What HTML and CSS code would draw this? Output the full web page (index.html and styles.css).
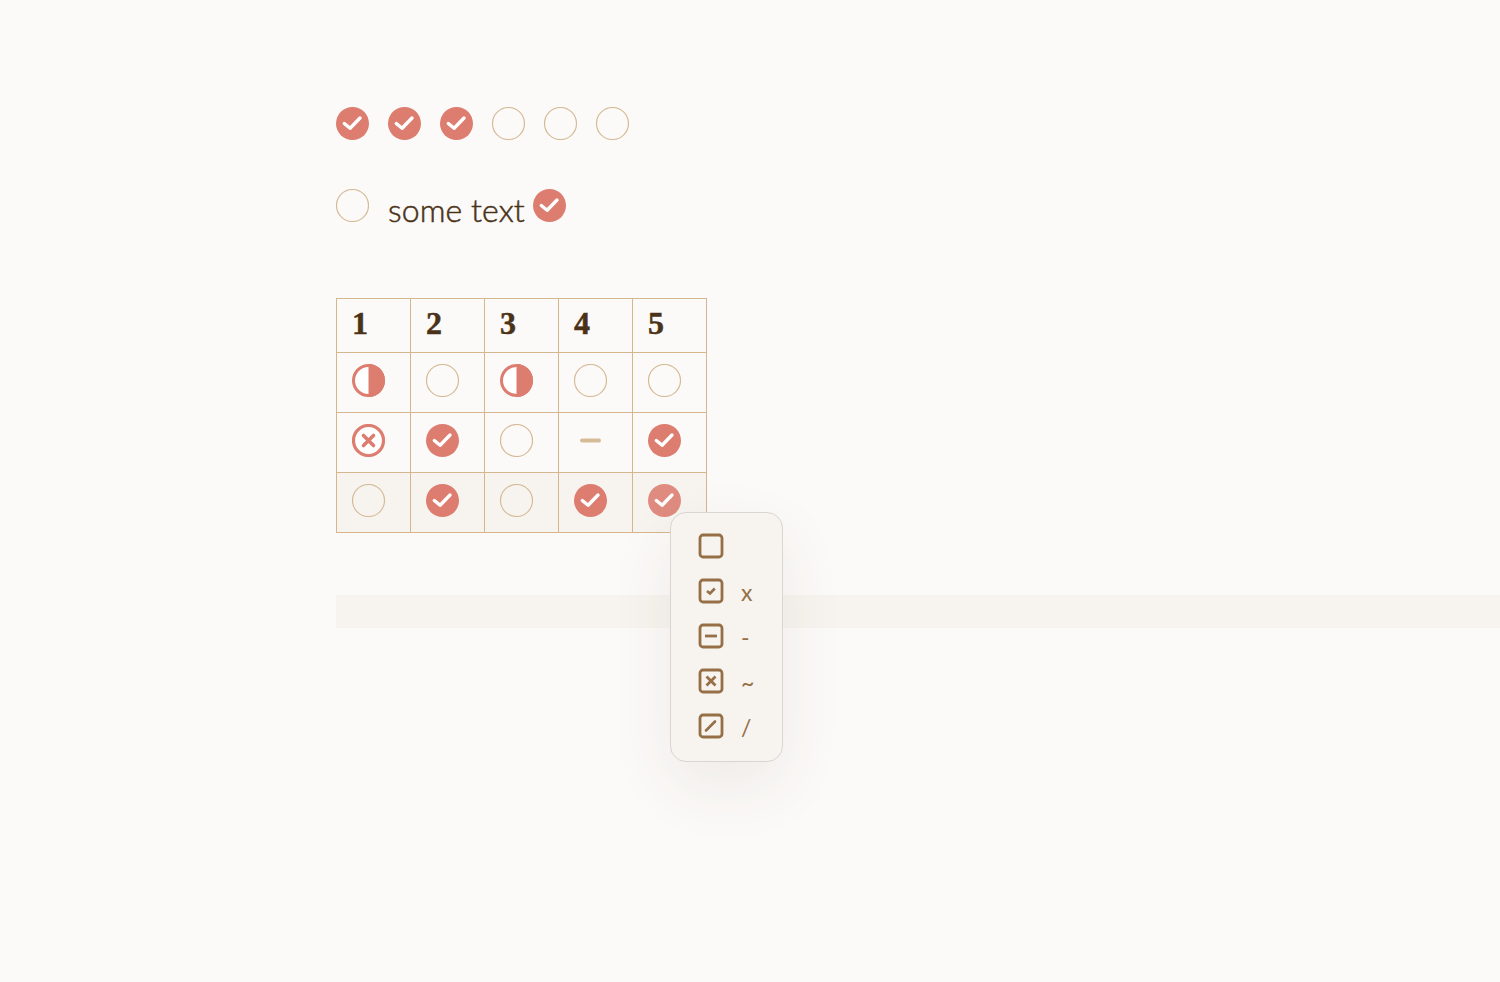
FILE: index.html
```html
<!DOCTYPE html>
<html lang="en">

<head>
  <meta charset="UTF-8">
  <meta name="viewport" content="width=device-width, initial-scale=1.0">
  <title>Task markers</title>
  <link rel="stylesheet" href="styles.css">
</head>

<body>
  <svg class="defs" width="0" height="0" aria-hidden="true">
    <symbol id="todo" viewBox="0 0 33 33">
      <circle cx="16.5" cy="16.5" r="16" fill="none" stroke="#d6bb98" stroke-width="1.2"></circle>
    </symbol>
    <symbol id="done" viewBox="0 0 33 33">
      <circle cx="16.5" cy="16.5" r="16.5" fill="#dd7d70"></circle>
      <path d="M8.300 16.500l5.800 4.800L24 11" fill="none" stroke="#fff" stroke-width="3.400" stroke-linecap="round" stroke-linejoin="round"></path>
    </symbol>
    <symbol id="half" viewBox="0 0 33 33">
      <circle cx="16.5" cy="16.5" r="15" fill="#fff" stroke="#dd7d70" stroke-width="3"></circle>
      <path d="M16.5 0a16.5 16.5 0 0 1 0 33z" fill="#dd7d70"></path>
    </symbol>
    <symbol id="cancel" viewBox="0 0 33 33">
      <circle cx="16.5" cy="16.5" r="15" fill="#fff" stroke="#dd7d70" stroke-width="3.200"></circle>
      <path d="M11.500 11.500l10 10M21.500 11.500l-10 10" fill="none" stroke="#dd7d70" stroke-width="3.600" stroke-linecap="round"></path>
    </symbol>
    <symbol id="dash" viewBox="0 0 33 33">
      <path d="M8 16.500h17" fill="none" stroke="#d6bb98" stroke-width="4" stroke-linecap="round"></path>
    </symbol>
    <symbol id="box" viewBox="0 0 26 26">
      <rect x="2" y="2" width="22" height="22" rx="3" fill="none" stroke="#966f47" stroke-width="2.800"></rect>
    </symbol>
  </svg>

  <main class="page">
    <div class="row">
      <svg class="mark"><use href="#done"></use></svg>
      <svg class="mark"><use href="#done"></use></svg>
      <svg class="mark"><use href="#done"></use></svg>
      <svg class="mark"><use href="#todo"></use></svg>
      <svg class="mark"><use href="#todo"></use></svg>
      <svg class="mark"><use href="#todo"></use></svg>
    </div>

    <div class="row row-text">
      <svg class="mark"><use href="#todo"></use></svg>
      <span class="label">some text</span>
      <svg class="mark"><use href="#done"></use></svg>
    </div>

    <table class="grid">
      <thead>
        <tr>
          <th>1</th>
          <th>2</th>
          <th>3</th>
          <th>4</th>
          <th>5</th>
        </tr>
      </thead>
      <tbody>
        <tr>
          <td><svg class="mark"><use href="#half"></use></svg></td>
          <td><svg class="mark"><use href="#todo"></use></svg></td>
          <td><svg class="mark"><use href="#half"></use></svg></td>
          <td><svg class="mark"><use href="#todo"></use></svg></td>
          <td><svg class="mark"><use href="#todo"></use></svg></td>
        </tr>
        <tr>
          <td><svg class="mark"><use href="#cancel"></use></svg></td>
          <td><svg class="mark"><use href="#done"></use></svg></td>
          <td><svg class="mark"><use href="#todo"></use></svg></td>
          <td><svg class="mark"><use href="#dash"></use></svg></td>
          <td><svg class="mark"><use href="#done"></use></svg></td>
        </tr>
        <tr class="active">
          <td><svg class="mark"><use href="#todo"></use></svg></td>
          <td><svg class="mark"><use href="#done"></use></svg></td>
          <td><svg class="mark"><use href="#todo"></use></svg></td>
          <td><svg class="mark"><use href="#done"></use></svg></td>
          <td><svg class="mark hovered"><use href="#done"></use></svg></td>
        </tr>
      </tbody>
    </table>

    <div class="bar"></div>
  </main>

  <!-- status menu -->
  <div class="menu">
    <div class="menu-item">
      <svg class="box"><use href="#box"></use></svg>
    </div>
    <div class="menu-item">
      <svg class="box" viewBox="0 0 26 26">
        <use href="#box"></use>
        <path d="M9 13l3 2.500 4.800-5" fill="none" stroke="#966f47" stroke-width="2.600"></path>
      </svg>
      <span>x</span>
    </div>
    <div class="menu-item">
      <svg class="box" viewBox="0 0 26 26">
        <use href="#box"></use>
        <path d="M7 13h12" fill="none" stroke="#966f47" stroke-width="2.800"></path>
      </svg>
      <span>-</span>
    </div>
    <div class="menu-item">
      <svg class="box" viewBox="0 0 26 26">
        <use href="#box"></use>
        <path d="M8.500 8.500l9 9M17.500 8.500l-9 9" fill="none" stroke="#966f47" stroke-width="2.800"></path>
      </svg>
      <span>~</span>
    </div>
    <div class="menu-item">
      <svg class="box" viewBox="0 0 26 26">
        <use href="#box"></use>
        <path d="M8 17.500l9-9" fill="none" stroke="#966f47" stroke-width="2.600" stroke-linecap="round"></path>
      </svg>
      <span>/</span>
    </div>
  </div>
</body>

</html>
```

FILE: styles.css
```css
html,
body {
  margin: 0;
  padding: 0;
  height: 100%;
}

body {
  position: relative;
  overflow: hidden;
  background-color: #fcfaf8;
  color: #4a3218;
  font-family: "Lato", "Liberation Sans", sans-serif;
}

.defs {
  position: absolute;
}

.page {
  padding: 107px 0 0 336px;
}

.row {
  display: flex;
  gap: 19px;
}

.row-text {
  margin-top: 49px;
  gap: 0;
}

.row-text .label {
  margin: 0 8px 0 19px;
  font-size: 32px;
  font-weight: 300;
  letter-spacing: 0.1px;
  line-height: 42px;
  -webkit-text-stroke: 0.5px #4a3218;
}

.mark {
  display: block;
  width: 33px;
  height: 33px;
}

.mark.hovered {
  opacity: 0.88;
}

.grid {
  margin-top: 67px;
  border-collapse: collapse;
  table-layout: fixed;
  width: 371px;
}

.grid th,
.grid td {
  border: 1px solid #d6b68d;
  padding: 11px 15px 15px;
  text-align: left;
}

.grid th {
  padding: 4px 15px 9px;
  font-family: "Liberation Serif", "DejaVu Serif", serif;
  font-size: 32px;
  font-weight: 700;
  line-height: 40px;
  -webkit-text-stroke: 0.5px #4a3218;
}

.grid tr.active td {
  background-color: #f7f4ef;
}

.bar {
  margin-top: 62px;
  height: 33px;
  background-color: #f7f4ef;
}

.menu {
  position: absolute;
  left: 670px;
  top: 512px;
  box-sizing: border-box;
  width: 113px;
  height: 250px;
  padding: 20px 0 0 27px;
  display: flex;
  flex-direction: column;
  gap: 19px;
  background-color: #f7f4f0;
  border: 1px solid #d9d5d1;
  border-radius: 16px;
  box-shadow: 0 24px 64px rgba(60, 50, 40, 0.08);
  color: #966f47;
  font-size: 23px;
  font-weight: 400;
}

.menu-item {
  display: flex;
  gap: 17px;
  height: 26px;
}

.menu-item span {
  line-height: 28px;
}

.box {
  display: block;
  flex: none;
  width: 26px;
  height: 26px;
}
```
